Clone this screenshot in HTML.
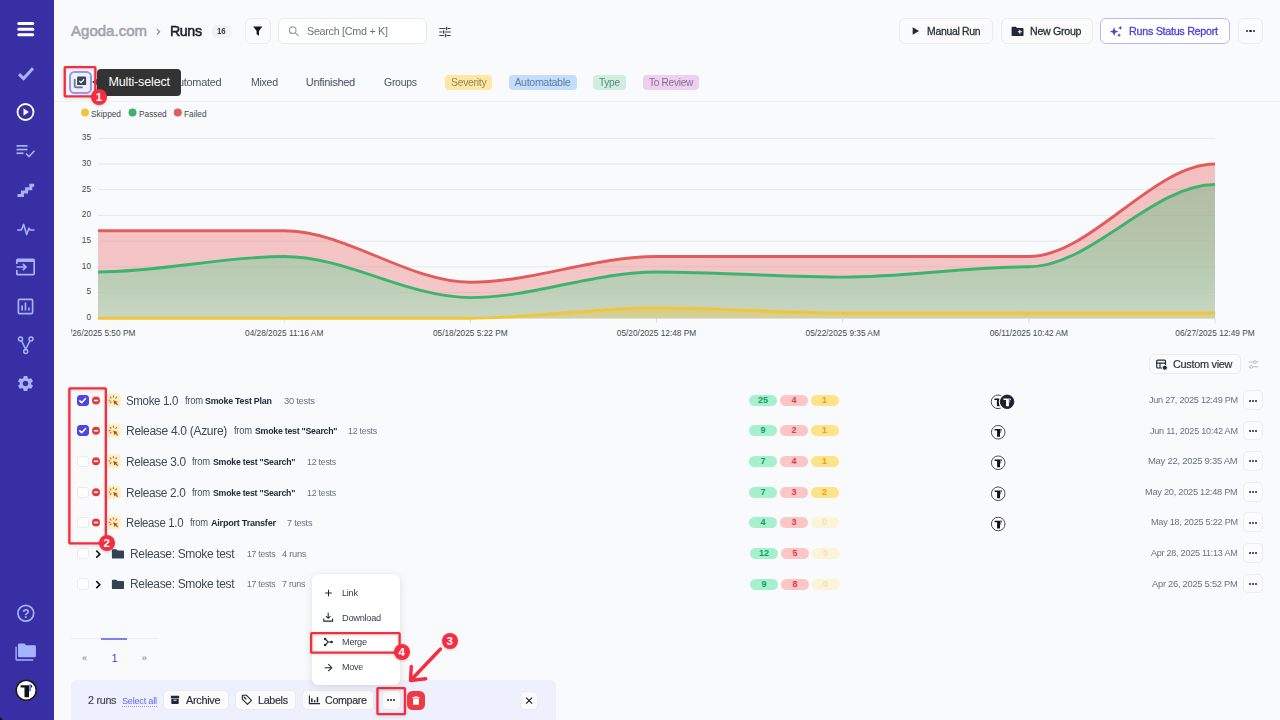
<!DOCTYPE html>
<html lang="en">
<head>
<meta charset="utf-8">
<title>Runs</title>
<style>
*{box-sizing:border-box;margin:0;padding:0}
html,body{width:1280px;height:720px;overflow:hidden}
body{background:#f9fafb;font-family:"Liberation Sans",Arial,sans-serif;color:#374151;position:relative;font-size:11px}
.abs{position:absolute}
#side{position:absolute;left:0;top:0;width:54px;height:720px;background:#372fa3}
#side svg{position:absolute}
.btn{position:absolute;background:#fbfbfc;border:1px solid #ebecef;border-radius:5px;font-size:11px;color:#1f2937;white-space:nowrap}
.btn span{position:absolute;top:50%;transform:translateY(-50%);line-height:1}
.ax{font-size:8.3px;fill:#444a4d;font-family:"Liberation Sans",Arial,sans-serif}
.axx{font-size:8.3px;fill:#444a4d;font-family:"Liberation Sans",Arial,sans-serif}
.lg{font-size:8.3px;fill:#444a4d;font-family:"Liberation Sans",Arial,sans-serif}
.tab{position:absolute;top:75px;font-size:11px;color:#374151;line-height:14px;white-space:nowrap}
.lab{position:absolute;top:75px;height:14.5px;border-radius:4px}
.cb{position:absolute;left:77.4px;width:11.3px;height:11.3px;border:1px solid #e9eaee;border-radius:3px;background:#fff}
.cb.on{background:#4f46e5;border-color:#4f46e5}
.cb svg{position:absolute;left:-1px;top:-1px}
.rt{position:absolute;left:126px;height:20px;line-height:20px;white-space:nowrap}
.ttl{font-size:13px;color:#374151}
.frm{font-size:10px;color:#4b5563;margin-left:6px}
.pl{font-size:9.5px;color:#1f2937;margin-left:3px;font-weight:bold}
.cnt{font-size:9.5px;color:#6b7280;margin-left:12px}
.pill{position:absolute;width:28px;height:11.4px;border-radius:6px;font-size:9px;line-height:11.6px;text-align:center;font-weight:bold}
.pg{background:#a7f0cd;color:#0f9f67}
.pr{background:#fcc5c6;color:#e8383d}
.py{background:#fde38a;color:#f29b0c}
.py.z{background:#fbf4d8;color:#f8e2b4}
.av{position:absolute}
.dt{position:absolute;right:42px;font-size:9.5px;color:#6b7280;line-height:16px;white-space:nowrap}
.more{position:absolute;left:1243.2px;width:20px;height:19.8px;border:1px solid #ecedf0;border-radius:5px;background:#fcfcfd}
.more i{position:absolute;top:8.5px;width:2px;height:2px;border-radius:1px;background:#111827}
.more i:nth-child(1){left:5.5px}.more i:nth-child(2){left:8.5px}.more i:nth-child(3){left:11.5px}
.redbox{position:absolute;border:2.3px solid #f62d3f;border-radius:1.5px;box-shadow:0 1px 4px rgba(0,0,0,.14)}
.num{position:absolute;width:16px;height:16px;border-radius:8px;background:#f62d3f;color:#fff;font-weight:bold;font-size:11.5px;line-height:16px;text-align:center;box-shadow:0 1px 3px rgba(0,0,0,.2)}
.t{position:absolute;white-space:nowrap;line-height:16px;height:16px;transform-origin:0 50%}
.t.m{-webkit-text-stroke:0.18px currentColor}
.t.h{-webkit-text-stroke:0.3px currentColor}
.t.s{-webkit-text-stroke:0.55px currentColor}
.dots{position:absolute;width:9px;height:2px}
.dots i{position:absolute;top:0;width:1.9px;height:1.9px;border-radius:1px;background:#1f2430}
.dots.big i{width:2.4px;height:2.4px;border-radius:1.2px;top:-0.2px}
.dots.big i:nth-child(2){left:3.4px!important}.dots.big i:nth-child(3){left:6.8px!important}
.dots i:nth-child(1){left:0}.dots i:nth-child(2){left:3px}.dots i:nth-child(3){left:6px}
</style>
</head>
<body>
<svg width="0" height="0" style="position:absolute"><defs><filter id="rbs" x="-20%" y="-20%" width="140%" height="140%"><feGaussianBlur stdDeviation="1.4"/></filter></defs></svg>
<div id="side">
<!-- hamburger -->
<svg style="left:17px;top:21px" width="18" height="18" viewBox="0.000 -0.500 18.000 18.000"><g fill="#fff"><rect x="0.3" y="0.5" width="17" height="3" rx="1.5"/><rect x="0.3" y="6.2" width="17" height="3" rx="1.5"/><rect x="0.3" y="11.8" width="17" height="3" rx="1.5"/></g></svg>
<!-- check -->
<svg style="left:17px;top:66px" width="18" height="15" viewBox="0 0 18 15"><path d="M2 8.2l4.6 4.4L16 2.2" fill="none" stroke="#a5b4fc" stroke-width="3"/></svg>
<!-- play -->
<svg style="left:15px;top:102px" width="21" height="20" viewBox="-0.500 0.000 21.000 20.000"><circle cx="10" cy="10" r="8" fill="none" stroke="#fff" stroke-width="1.8"/><path d="M8 6.2l5.4 3.8L8 13.8z" fill="#fff"/></svg>
<!-- list check -->
<svg style="left:16px;top:144px" width="20" height="14" viewBox="0 0 20 14"><g fill="#a5b4fc"><rect x="0.5" y="1" width="11" height="1.7"/><rect x="0.5" y="4.7" width="11" height="1.7"/><rect x="0.5" y="8.4" width="7" height="1.7"/></g><path d="M10 9.5l3 3 5.5-5.8" fill="none" stroke="#a5b4fc" stroke-width="1.6"/></svg>
<!-- stairs -->
<svg style="left:17px;top:183px" width="18" height="15" viewBox="-0.500 -0.700 18.000 15.000"><path d="M0 11.8h4.9v-3.43h4.2v-3.43h4.2v-3.43h3.4" fill="none" stroke="#a5b4fc" stroke-width="3"/></svg>
<!-- pulse -->
<svg style="left:17px;top:221px" width="18" height="16" viewBox="0 0 18 16"><path d="M0.8 9h3.6l2.3-5.6 3 10 2.2-6.2 1.3 1.8h3.8" fill="none" stroke="#a5b4fc" stroke-width="1.6" stroke-linejoin="round" stroke-linecap="round"/></svg>
<!-- import -->
<svg style="left:15px;top:258px" width="21" height="18" viewBox="0 0 21 18"><path d="M1.8 6V2.4c0-.6.4-1 1-1h15.4c.6 0 1 .4 1 1v13.200000000000001c0 .6-.4 1-1 1H2.800000000000001c-.6 0-1-.4-1-1V12" fill="none" stroke="#a5b4fc" stroke-width="1.7"/><rect x="1.8" y="1.4" width="17.4" height="2.6" fill="#a5b4fc"/><path d="M1.5 9h9.5M7.8 5.8L11 9l-3.200000000000001 3.2" fill="none" stroke="#a5b4fc" stroke-width="1.7"/></svg>
<!-- chart -->
<svg style="left:17px;top:298px" width="17" height="17" viewBox="0 0 17 17"><rect x="1.4" y="1.4" width="14.2" height="14.2" rx="1.2" fill="none" stroke="#a5b4fc" stroke-width="1.7"/><g fill="#a5b4fc"><rect x="4.3" y="7.5" width="1.7" height="5"/><rect x="7.6" y="4.5" width="1.7" height="8"/><rect x="11" y="9.5" width="1.7" height="3"/></g></svg>
<!-- fork -->
<svg style="left:17px;top:335px" width="18" height="21" viewBox="0.000 -0.300 18.000 21.000"><g fill="none" stroke="#a5b4fc" stroke-width="1.5"><circle cx="3.5" cy="3.7" r="2"/><circle cx="14" cy="3.7" r="2"/><circle cx="8.7" cy="16.2" r="2"/><path d="M4.5 5.4l4.200000000000001 8.6 4.300000000000001-8.6"/></g></svg>
<!-- gear -->
<svg style="left:16px;top:374px" width="19" height="19" viewBox="0 0 24 24"><path fill="#a5b4fc" d="M19.14 12.94c.04-.3.06-.61.06-.94 0-.32-.02-.64-.07-.94l2.030-1.580c.18-.14.23-.41.12-.61l-1.920-3.320c-.12-.22-.37-.29-.59-.22l-2.390.96c-.5-.38-1.030-.7-1.620-.94l-.36-2.540c-.04-.24-.24-.41-.48-.41h-3.840c-.24 0-.43.17-.47.41l-.36 2.540c-.59.24-1.130.57-1.620.94l-2.390-.96c-.22-.08-.47 0-.59.220L2.740 8.870c-.12.21-.08.47.12.61l2.030 1.580c-.05.3-.09.63-.09.940s.02.640.07.940l-2.030 1.580c-.18.140-.23.410-.12.610l1.920 3.320c.12.220.37.290.59.220l2.390-.96c.5.380 1.030.7 1.620.94l.36 2.540c.05.240.24.410.48.410h3.840c.24 0 .44-.17.470-.41l.36-2.540c.59-.24 1.130-.56 1.620-.94l2.390.96c.22.080.47 0 .59-.22l1.920-3.320c.12-.22.070-.47-.12-.61l-2.010-1.580zM12 15.600c-1.980 0-3.600-1.620-3.600-3.600s1.620-3.600 3.600-3.600 3.600 1.620 3.600 3.600-1.620 3.600-3.600 3.600z"/></svg>
<!-- help -->
<svg style="left:16px;top:604px" width="20" height="19" viewBox="-0.500 0.000 20.000 19.000"><circle cx="9.3" cy="9.3" r="7.9" fill="none" stroke="#a5b4fc" stroke-width="1.7"/><text x="9.3" y="13.6" text-anchor="middle" font-size="12" font-weight="bold" fill="#a5b4fc" font-family="Liberation Sans, sans-serif">?</text></svg>
<!-- folders -->
<svg style="left:15px;top:643px" width="22" height="18" viewBox="0 0 22 18"><path d="M4.200000000000001 0.6h5.2l1.7 1.7h8.6c.7 0 1.200000000000001.5 1.200000000000001 1.200000000000001v9.5c0 .7-.5 1.200000000000001-1.200000000000001 1.200000000000001H4.200000000000001c-.7 0-1.200000000000001-.5-1.200000000000001-1.200000000000001V1.8c0-.7.5-1.200000000000001 1.200000000000001-1.200000000000001z" fill="#a5b4fc"/><path d="M1.100000000000001 3.7v12.600000000000001c0 .4.300000000000001.7.7.7h16.5" fill="none" stroke="#a5b4fc" stroke-width="1.4"/></svg>
<!-- avatar -->
<svg style="left:15px;top:679px" width="23" height="23" viewBox="0 0 23 23"><circle cx="11.2" cy="11.2" r="10" fill="#fff" stroke="#1a1a1a" stroke-width="1.5"/><path d="M5.6 6.2h8.4v12H9.5V8.5H5.6z" fill="#111"/><rect x="14" y="5.4" width="2" height="6.8" fill="#5b8def"/><rect x="16" y="6.2" width="1.1" height="2.2" fill="#111"/></svg>
<div style="position:absolute;left:0;top:717px;width:3px;height:3px;background:radial-gradient(circle at 100% 0,rgba(0,0,0,0) 2.4px,#000 3px)"></div>
</div>

<!-- header -->
<span class="t s" style="left:71.00px;top:23.00px;font-size:15px;color:#a1a4aa;letter-spacing:0.014px;">Agoda.com</span>
<svg class="abs" style="left:156px;top:28px" width="5" height="8" viewBox="0.000 -0.300 5.000 8.000"><path d="M1 0.7l2.6 2.8L1 6.3" fill="none" stroke="#7b808a" stroke-width="1.1"/></svg>
<span class="t s" style="left:170.00px;top:23.00px;font-size:15px;color:#1c1f26;letter-spacing:-0.420px;transform:scaleX(0.9476);">Runs</span>
<div class="abs" style="left:212px;top:24.5px;width:19.5px;height:13.5px;border-radius:5px;background:#f1f2f4"></div>
<span class="t" style="left:217.00px;top:23.20px;font-size:8.5px;color:#374151;letter-spacing:-0.238px;font-weight:bold;transform:scaleX(0.9208);">16</span>
<div class="btn" style="left:245px;top:18px;width:25.5px;height:25.5px;border-radius:6px"><svg style="position:absolute;left:6px;top:7px" width="11" height="11" viewBox="-0.800 -0.200 11.000 11.000"><path d="M0.4 0.4h9.2l-3.4 4.3v4.9L3.8 8.1V4.7z" fill="#111827"/></svg></div>
<div class="abs" style="left:278.4px;top:18px;width:148.2px;height:25.6px;background:#fff;border:1px solid #e8e9ec;border-radius:6px"></div>
<svg class="abs" style="left:288px;top:26px" width="12" height="11" viewBox="-0.500 0.000 12.000 11.000"><circle cx="4.2" cy="4.2" r="3.3" fill="none" stroke="#9ca3af" stroke-width="1.2"/><path d="M6.7 6.7l3.5 3.5" stroke="#9ca3af" stroke-width="1.2"/></svg>
<span class="t" style="left:307.00px;top:23.20px;font-size:11px;color:#6b7280;letter-spacing:-0.308px;transform:scaleX(0.9818);">Search [Cmd + K]</span>
<svg class="abs" style="left:439px;top:26px" width="12" height="12" viewBox="0.000 -0.500 12.000 12.000"><g stroke="#374151" stroke-width="1.2" fill="none"><path d="M0.3 2h6.2M8.7 2h3M0.3 5.5h3M5.7 5.5h6M0.3 9h5M7.7 9h4M7.6 0.3v3.4M4.6 3.8v3.4M6.6 7.3v3.4"/></g></svg>

<div class="btn" style="left:899px;top:18px;width:93.7px;height:25.6px;border-radius:6px"><svg style="position:absolute;left:12px;top:8px" width="8" height="8" viewBox="-0.500 0.000 8.000 8.000"><path d="M0.2 0.3l6.4 3.7-6.4 3.7z" fill="#1f2937"/></svg></div>
<span class="t h" style="left:927.20px;top:23.00px;font-size:11px;color:#2a303c;letter-spacing:-0.308px;transform:scaleX(0.9477);">Manual Run</span>
<div class="btn" style="left:1001px;top:18px;width:91.6px;height:25.6px;border-radius:6px"><svg style="position:absolute;left:9px;top:7px" width="13" height="11" viewBox="-0.500 -0.500 13.000 11.000"><path d="M1 0.2h3.3l1.2 1.2h5.6c.5 0 .9.4.9.9v6.400000000000001c0 .5-.4.9-.9.9H1c-.5 0-.9-.4-.9-.9V1.100000000000001c0-.5.4-.9.9-.9z" fill="#1f2937"/><path d="M8.3 3.3v4M6.3 5.3h4" stroke="#fff" stroke-width="1.1"/></svg></div>
<span class="t h" style="left:1029.50px;top:23.00px;font-size:11px;color:#2a303c;letter-spacing:-0.308px;transform:scaleX(0.9685);">New Group</span>
<div class="btn" style="left:1100px;top:18px;width:129.7px;height:25.6px;border-radius:6px;border-color:#b4b8f5;background:#fff"><svg style="position:absolute;left:8px;top:6px" width="15" height="13" viewBox="-0.500 0.000 15.000 13.000"><g fill="#4a42d6"><path d="M4.6 2.3l1.2 3.100000000000001 3.100000000000001 1.2-3.100000000000001 1.2-1.2 3.100000000000001-1.2-3.100000000000001L0.3 6.6l3.100000000000001-1.2z"/><path d="M10.8 0.7l.65 1.55 1.55.65-1.55.65-.65 1.55-.65-1.55-1.55-.65 1.55-.65z"/><path d="M9.6 8.2l.6 1.400000000000001 1.400000000000001.6-1.400000000000001.6-.6 1.400000000000001-.6-1.400000000000001-1.400000000000001-.6 1.400000000000001-.6z"/></g></svg></div>
<span class="t h" style="left:1129.20px;top:23.00px;font-size:11px;color:#4a42d6;letter-spacing:-0.308px;transform:scaleX(0.9806);">Runs Status Report</span>
<div class="btn" style="left:1238.3px;top:18px;width:24.7px;height:25.6px;border-radius:6px"></div>
<div class="dots big" style="left:1246px;top:30px"><i></i><i></i><i></i></div>

<!-- tabs -->
<div class="abs" style="left:54px;top:101px;width:1226px;height:1px;background:#eff0f3"></div>
<span class="t" style="left:171.44px;top:73.50px;font-size:11px;color:#4b5563;letter-spacing:-0.308px;transform:scaleX(0.9964);">Automated</span>
<span class="t" style="left:250.50px;top:73.50px;font-size:11px;color:#4b5563;letter-spacing:-0.308px;transform:scaleX(0.9640);">Mixed</span>
<span class="t" style="left:305.80px;top:73.50px;font-size:11px;color:#4b5563;letter-spacing:-0.287px;">Unfinished</span>
<span class="t" style="left:383.60px;top:73.50px;font-size:11px;color:#4b5563;letter-spacing:-0.308px;transform:scaleX(0.9555);">Groups</span>
<div class="lab" style="left:444.8px;width:46.8px;background:#fde7a6"></div>
<span class="t" style="left:450.60px;top:74.30px;font-size:10.5px;color:#9a8450;letter-spacing:-0.294px;transform:scaleX(0.9922);">Severity</span>
<div class="lab" style="left:508.5px;width:68px;background:#c3ddfb"></div>
<span class="t" style="left:514.40px;top:74.30px;font-size:10.5px;color:#5f7fa6;letter-spacing:-0.277px;">Automatable</span>
<div class="lab" style="left:592.9px;width:33px;background:#cfeee0"></div>
<span class="t" style="left:599.20px;top:74.30px;font-size:10.5px;color:#5a8876;letter-spacing:-0.294px;transform:scaleX(0.9642);">Type</span>
<div class="lab" style="left:642.6px;width:56.2px;background:#ecd0ef"></div>
<span class="t" style="left:648.70px;top:74.30px;font-size:10.5px;color:#8d6a92;letter-spacing:-0.294px;transform:scaleX(0.9613);">To Review</span>

<!-- multi-select -->
<div class="abs" style="left:69px;top:71px;width:22.8px;height:22.8px;border-radius:5.5px;background:#eef0fc;border:2px solid #9497f5"></div>
<svg class="abs" style="left:73px;top:76px" width="15" height="13" viewBox="-0.500 0.000 15.000 13.000"><path d="M1.2 3.6v6.3c0 .8.6 1.400000000000001 1.400000000000001 1.400000000000001h6" fill="none" stroke="#6b7280" stroke-width="1.7" stroke-linecap="round"/><rect x="3.6" y="0.6" width="9" height="8.5" rx="1.2" fill="#3b4556"/><path d="M5.7 4.9l1.8 1.7 3.1-3.3" fill="none" stroke="#fff" stroke-width="1.25"/></svg>
<div class="abs" style="left:97px;top:69px;width:83.6px;height:26.7px;border-radius:4px;background:#333"></div>
<div class="abs" style="left:92px;top:79.3px;width:0;height:0;border:3.2px solid transparent;border-left:0;border-right:5.4px solid #333"></div>
<svg class="abs" style="left:55px;top:58px" width="50" height="48" viewBox="55 58 50 48"><rect x="64.75" y="67.95" width="30.60" height="29.20" rx="0.6" fill="none" stroke="#000" stroke-opacity="0.13" stroke-width="2.9" filter="url(#rbs)"/><rect x="64.75" y="67.15" width="30.60" height="29.20" rx="0.6" fill="none" stroke="#f62d3f" stroke-width="2.3"/></svg>
<span class="t" style="left:108.50px;top:74.30px;font-size:12.5px;color:#fff;letter-spacing:-0.156px;">Multi-select</span>
<div class="num" style="left:90.9px;top:89.2px">1</div>

<svg width="1280" height="360" viewBox="0 0 1280 360" style="position:absolute;left:0;top:0">
<defs>
<linearGradient id="gr" x1="0" y1="0" x2="0" y2="1"><stop offset="0" stop-color="#ec6f6f" stop-opacity="0.42"/><stop offset="1" stop-color="#ec6f6f" stop-opacity="0.36"/></linearGradient>
<linearGradient id="gg" x1="0" y1="0" x2="0" y2="1"><stop offset="0" stop-color="#3db46d" stop-opacity="0.35"/><stop offset="1" stop-color="#aae1be" stop-opacity="0.6"/></linearGradient>
<linearGradient id="gy" x1="0" y1="0" x2="0" y2="1"><stop offset="0" stop-color="#f0c53a" stop-opacity="0.5"/><stop offset="1" stop-color="#f0c53a" stop-opacity="0.25"/></linearGradient>
</defs>
<line x1="98.0" x2="1215.0" y1="318.2" y2="318.2" stroke="#e7e8ea" stroke-width="1"/>
<text x="91" y="320.1" text-anchor="end" class="ax">0</text>
<line x1="98.0" x2="1215.0" y1="292.5" y2="292.5" stroke="#e7e8ea" stroke-width="1"/>
<text x="91" y="294.4" text-anchor="end" class="ax">5</text>
<line x1="98.0" x2="1215.0" y1="266.8" y2="266.8" stroke="#e7e8ea" stroke-width="1"/>
<text x="91" y="268.7" text-anchor="end" class="ax">10</text>
<line x1="98.0" x2="1215.0" y1="241.1" y2="241.1" stroke="#e7e8ea" stroke-width="1"/>
<text x="91" y="243.0" text-anchor="end" class="ax">15</text>
<line x1="98.0" x2="1215.0" y1="215.4" y2="215.4" stroke="#e7e8ea" stroke-width="1"/>
<text x="91" y="217.3" text-anchor="end" class="ax">20</text>
<line x1="98.0" x2="1215.0" y1="189.7" y2="189.7" stroke="#e7e8ea" stroke-width="1"/>
<text x="91" y="191.6" text-anchor="end" class="ax">25</text>
<line x1="98.0" x2="1215.0" y1="164.0" y2="164.0" stroke="#e7e8ea" stroke-width="1"/>
<text x="91" y="165.9" text-anchor="end" class="ax">30</text>
<line x1="98.0" x2="1215.0" y1="138.3" y2="138.3" stroke="#e7e8ea" stroke-width="1"/>
<text x="91" y="140.2" text-anchor="end" class="ax">35</text>
<line x1="284.2" x2="284.2" y1="318.2" y2="323.2" stroke="#dcdde0" stroke-width="1"/>
<line x1="470.3" x2="470.3" y1="318.2" y2="323.2" stroke="#dcdde0" stroke-width="1"/>
<line x1="656.5" x2="656.5" y1="318.2" y2="323.2" stroke="#dcdde0" stroke-width="1"/>
<line x1="842.7" x2="842.7" y1="318.2" y2="323.2" stroke="#dcdde0" stroke-width="1"/>
<line x1="1028.8" x2="1028.8" y1="318.2" y2="323.2" stroke="#dcdde0" stroke-width="1"/>
<line x1="1215.0" x2="1215.0" y1="318.2" y2="323.2" stroke="#dcdde0" stroke-width="1"/>
<path d="M98.00 230.82 C160.06 230.82 222.11 230.82 284.17 230.82 C346.22 230.82 408.28 282.22 470.33 282.22 C532.39 282.22 594.44 256.52 656.50 256.52 C718.56 256.52 780.61 256.52 842.67 256.52 C904.72 256.52 966.78 256.52 1028.83 256.52 C1090.89 256.52 1152.94 164.00 1215.00 164.00 L1215.00 318.20 L98.00 318.20 Z" fill="url(#gr)"/>
<path d="M98.00 271.94 C160.06 271.94 222.11 256.52 284.17 256.52 C346.22 256.52 408.28 297.64 470.33 297.64 C532.39 297.64 594.44 271.94 656.50 271.94 C718.56 271.94 780.61 277.08 842.67 277.08 C904.72 277.08 966.78 266.80 1028.83 266.80 C1090.89 266.80 1152.94 184.56 1215.00 184.56 L1215.00 318.20 L98.00 318.20 Z" fill="url(#gg)"/>
<path d="M98.00 318.20 C160.06 318.20 222.11 318.20 284.17 318.20 C346.22 318.20 408.28 318.20 470.33 318.20 C532.39 318.20 594.44 307.92 656.50 307.92 C718.56 307.92 780.61 313.06 842.67 313.06 C904.72 313.06 966.78 313.06 1028.83 313.06 C1090.89 313.06 1152.94 313.06 1215.00 313.06 L1215.00 318.20 L98.00 318.20 Z" fill="url(#gy)"/>
<path d="M98.00 230.82 C160.06 230.82 222.11 230.82 284.17 230.82 C346.22 230.82 408.28 282.22 470.33 282.22 C532.39 282.22 594.44 256.52 656.50 256.52 C718.56 256.52 780.61 256.52 842.67 256.52 C904.72 256.52 966.78 256.52 1028.83 256.52 C1090.89 256.52 1152.94 164.00 1215.00 164.00" fill="none" stroke="#e25c5c" stroke-width="2.9"/>
<path d="M98.00 271.94 C160.06 271.94 222.11 256.52 284.17 256.52 C346.22 256.52 408.28 297.64 470.33 297.64 C532.39 297.64 594.44 271.94 656.50 271.94 C718.56 271.94 780.61 277.08 842.67 277.08 C904.72 277.08 966.78 266.80 1028.83 266.80 C1090.89 266.80 1152.94 184.56 1215.00 184.56" fill="none" stroke="#3db46d" stroke-width="2.9"/>
<path d="M98.00 318.20 C160.06 318.20 222.11 318.20 284.17 318.20 C346.22 318.20 408.28 318.20 470.33 318.20 C532.39 318.20 594.44 307.92 656.50 307.92 C718.56 307.92 780.61 313.06 842.67 313.06 C904.72 313.06 966.78 313.06 1028.83 313.06 C1090.89 313.06 1152.94 313.06 1215.00 313.06" fill="none" stroke="#f0c53a" stroke-width="2.9"/>
<svg x="71" y="320" width="1209" height="30" viewBox="71 320 1209 30"><text x="98.0" y="336" text-anchor="middle" class="axx">04/26/2025 5:50 PM</text>
<text x="284.2" y="336" text-anchor="middle" class="axx">04/28/2025 11:16 AM</text>
<text x="470.3" y="336" text-anchor="middle" class="axx">05/18/2025 5:22 PM</text>
<text x="656.5" y="336" text-anchor="middle" class="axx">05/20/2025 12:48 PM</text>
<text x="842.7" y="336" text-anchor="middle" class="axx">05/22/2025 9:35 AM</text>
<text x="1028.8" y="336" text-anchor="middle" class="axx">06/11/2025 10:42 AM</text>
<text x="1215.0" y="336" text-anchor="middle" class="axx">06/27/2025 12:49 PM</text>
</svg><circle cx="85" cy="112.5" r="4" fill="#f0c53a"/><text x="91" y="117" class="lg">Skipped</text>
<circle cx="132.5" cy="112.5" r="4" fill="#3db46d"/><text x="139" y="117" class="lg">Passed</text>
<circle cx="177.8" cy="112.5" r="4" fill="#e25c5c"/><text x="184" y="117" class="lg">Failed</text>
</svg>


<!-- custom view -->
<div class="btn" style="left:1149.2px;top:354.2px;width:91.5px;height:20px;border-radius:5px"><svg style="position:absolute;left:6px;top:4px" width="12" height="12" viewBox="0.000 -0.500 12.000 12.000"><rect x="0.7" y="0.7" width="8.8" height="7.8" rx="1" fill="none" stroke="#1f2937" stroke-width="1.2"/><path d="M0.7 3.6h8.8M4 3.6v5" stroke="#1f2937" stroke-width="1.1"/><circle cx="8.8" cy="8.2" r="2.5" fill="#1f2937" stroke="#fcfcfd" stroke-width="0.9"/></svg></div>
<span class="t m" style="left:1172.50px;top:356.30px;font-size:11.5px;color:#2a303c;letter-spacing:-0.322px;transform:scaleX(0.9504);">Custom view</span>
<svg class="abs" style="left:1248px;top:359px" width="11" height="11" viewBox="-0.500 -0.500 11.000 11.000"><g stroke="#b4b9c1" stroke-width="0.9" fill="none"><path d="M0.2 2.5h5M7.8 2.5h2M0.2 7.3h1.2M4.2 7.3h5.6"/><circle cx="6.4" cy="2.5" r="1.4"/><circle cx="2.8" cy="7.3" r="1.4"/></g></svg>

<span class="cb on" style="top:394.90px"> <svg width="11.3" height="11.3" viewBox="0 0 11.3 11.3"><path d="M2.8 5.9l1.9 1.8 3.7-4" fill="none" stroke="#fff" stroke-width="1.6" stroke-linecap="round" stroke-linejoin="round"/></svg></span><svg style="position:absolute;left:92px;top:396px" width="8" height="9" viewBox="0.000 -0.500 8.000 9.000"><circle cx="4" cy="4" r="4" fill="#e5383f"/><rect x="1.8" y="3.3" width="4.4" height="1.4" rx="0.4" fill="#fff"/></svg><svg style="position:absolute;left:107px;top:393px" width="14" height="15" viewBox="-0.600 -0.400 14.000 15.000"><rect width="13.1" height="13.9" rx="3.4" fill="#fdf0c8"/><g stroke="#c8680f" stroke-width="1.15" stroke-linecap="round"><path d="M5.8 2.5v1.1M2.6 3.8l0.85 0.85M1.4 6.8h1.1M2.6 9.4l0.85-0.85M9 3.8l-0.85 0.85"/></g><path d="M5.5 6.8l4.7 1.5-1.55 0.95 1.95 1.95-0.85 0.85-1.95-1.95-0.9 1.5z" fill="#b8520a"/></svg><span class="t" style="left:126.00px;top:392.50px;font-size:12.5px;color:#414957;letter-spacing:-0.350px;transform:scaleX(0.9181);">Smoke 1.0</span><span class="t" style="left:184.50px;top:392.80px;font-size:10px;color:#4b5563;letter-spacing:-0.280px;transform:scaleX(0.9395);">from</span><span class="t" style="left:205.20px;top:392.70px;font-size:9.5px;color:#1f2937;letter-spacing:-0.266px;font-weight:bold;transform:scaleX(0.9329);">Smoke Test Plan</span><span class="t" style="left:283.50px;top:392.80px;font-size:9.5px;color:#6b7280;letter-spacing:-0.266px;transform:scaleX(0.9867);">30 tests</span><span class="pill pg" style="left:749px;top:394.80px">25</span><span class="pill pr" style="left:780px;top:394.80px">4</span><span class="pill py" style="left:810.6px;top:394.80px">1</span><svg class="av" style="left:989px;top:392px" width="18" height="19" viewBox="-1.000 -1.800 18.000 19.000"><circle cx="8" cy="8" r="8.4" fill="#fff"/><circle cx="8" cy="8" r="6.8" fill="#fff" stroke="#333" stroke-width="0.9"/><path d="M4.4 4.8h5.4v7.7H6.9V6.3H4.4z" fill="#111"/><rect x="9.8" y="4.3" width="1.3" height="4.4" fill="#5b8def"/><rect x="11.1" y="4.8" width="0.7" height="1.4" fill="#111"/></svg><svg class="av" style="left:998px;top:392px" width="19" height="19" viewBox="-1.100 -1.800 19.000 19.000"><circle cx="8" cy="8" r="8.4" fill="#fff"/><circle cx="8" cy="8" r="6.8" fill="#222" stroke="#222" stroke-width="0.9"/><path d="M4.4 4.8h5.4v7.7H6.9V6.3H4.4z" fill="#fff"/><rect x="9.8" y="4.3" width="1.3" height="4.4" fill="#5b8def"/><rect x="11.1" y="4.8" width="0.7" height="1.4" fill="#fff"/></svg><span class="t" style="left:1148.80px;top:392.45px;font-size:9.5px;color:#6b7280;letter-spacing:-0.266px;transform:scaleX(0.9599);">Jun 27, 2025 12:49 PM</span><span class="more" style="top:390.30px"></span><div class="dots" style="left:1249px;top:400px"><i></i><i></i><i></i></div>
<span class="cb on" style="top:425.15px"> <svg width="11.3" height="11.3" viewBox="0 0 11.3 11.3"><path d="M2.8 5.9l1.9 1.8 3.7-4" fill="none" stroke="#fff" stroke-width="1.6" stroke-linecap="round" stroke-linejoin="round"/></svg></span><svg style="position:absolute;left:92px;top:426px" width="8" height="9" viewBox="0.000 -0.750 8.000 9.000"><circle cx="4" cy="4" r="4" fill="#e5383f"/><rect x="1.8" y="3.3" width="4.4" height="1.4" rx="0.4" fill="#fff"/></svg><svg style="position:absolute;left:107px;top:423px" width="14" height="15" viewBox="-0.600 -0.650 14.000 15.000"><rect width="13.1" height="13.9" rx="3.4" fill="#fdf0c8"/><g stroke="#c8680f" stroke-width="1.15" stroke-linecap="round"><path d="M5.8 2.5v1.1M2.6 3.8l0.85 0.85M1.4 6.8h1.1M2.6 9.4l0.85-0.85M9 3.8l-0.85 0.85"/></g><path d="M5.5 6.8l4.7 1.5-1.55 0.95 1.95 1.95-0.85 0.85-1.95-1.95-0.9 1.5z" fill="#b8520a"/></svg><span class="t" style="left:126.00px;top:422.75px;font-size:12.5px;color:#414957;letter-spacing:-0.350px;transform:scaleX(0.9659);">Release 4.0 (Azure)</span><span class="t" style="left:233.70px;top:423.05px;font-size:10px;color:#4b5563;letter-spacing:-0.280px;transform:scaleX(0.9395);">from</span><span class="t" style="left:254.50px;top:422.95px;font-size:9.5px;color:#1f2937;letter-spacing:-0.266px;font-weight:bold;transform:scaleX(0.9244);">Smoke test &quot;Search&quot;</span><span class="t" style="left:348.00px;top:423.05px;font-size:9.5px;color:#6b7280;letter-spacing:-0.266px;transform:scaleX(0.9294);">12 tests</span><span class="pill pg" style="left:749px;top:425.05px">9</span><span class="pill pr" style="left:780px;top:425.05px">2</span><span class="pill py" style="left:810.6px;top:425.05px">1</span><svg class="av" style="left:989px;top:423px" width="19" height="19" viewBox="-1.200 -1.250 19.000 19.000"><circle cx="8" cy="8" r="8.4" fill="#fff"/><circle cx="8" cy="8" r="6.8" fill="#fff" stroke="#333" stroke-width="0.9"/><path d="M4.4 4.8h5.4v7.7H6.9V6.3H4.4z" fill="#111"/><rect x="9.8" y="4.3" width="1.3" height="4.4" fill="#5b8def"/><rect x="11.1" y="4.8" width="0.7" height="1.4" fill="#111"/></svg><span class="t" style="left:1150.00px;top:422.70px;font-size:9.5px;color:#6b7280;letter-spacing:-0.266px;transform:scaleX(0.9597);">Jun 11, 2025 10:42 AM</span><span class="more" style="top:420.55px"></span><div class="dots" style="left:1249px;top:430px"><i></i><i></i><i></i></div>
<span class="cb" style="top:455.65px"></span><svg style="position:absolute;left:92px;top:457px" width="8" height="9" viewBox="0.000 -0.250 8.000 9.000"><circle cx="4" cy="4" r="4" fill="#e5383f"/><rect x="1.8" y="3.3" width="4.4" height="1.4" rx="0.4" fill="#fff"/></svg><svg style="position:absolute;left:107px;top:454px" width="14" height="15" viewBox="-0.600 -0.150 14.000 15.000"><rect width="13.1" height="13.9" rx="3.4" fill="#fdf0c8"/><g stroke="#c8680f" stroke-width="1.15" stroke-linecap="round"><path d="M5.8 2.5v1.1M2.6 3.8l0.85 0.85M1.4 6.8h1.1M2.6 9.4l0.85-0.85M9 3.8l-0.85 0.85"/></g><path d="M5.5 6.8l4.7 1.5-1.55 0.95 1.95 1.95-0.85 0.85-1.95-1.95-0.9 1.5z" fill="#b8520a"/></svg><span class="t" style="left:126.00px;top:453.75px;font-size:12.5px;color:#414957;letter-spacing:-0.350px;transform:scaleX(0.9491);">Release 3.0</span><span class="t" style="left:192.00px;top:454.05px;font-size:10px;color:#4b5563;letter-spacing:-0.280px;transform:scaleX(0.9395);">from</span><span class="t" style="left:212.80px;top:453.95px;font-size:9.5px;color:#1f2937;letter-spacing:-0.266px;font-weight:bold;transform:scaleX(0.9244);">Smoke test &quot;Search&quot;</span><span class="t" style="left:306.50px;top:454.05px;font-size:9.5px;color:#6b7280;letter-spacing:-0.266px;transform:scaleX(0.9294);">12 tests</span><span class="pill pg" style="left:749px;top:455.55px">7</span><span class="pill pr" style="left:780px;top:455.55px">4</span><span class="pill py" style="left:810.6px;top:455.55px">1</span><svg class="av" style="left:989px;top:453px" width="19" height="19" viewBox="-1.200 -1.750 19.000 19.000"><circle cx="8" cy="8" r="8.4" fill="#fff"/><circle cx="8" cy="8" r="6.8" fill="#fff" stroke="#333" stroke-width="0.9"/><path d="M4.4 4.8h5.4v7.7H6.9V6.3H4.4z" fill="#111"/><rect x="9.8" y="4.3" width="1.3" height="4.4" fill="#5b8def"/><rect x="11.1" y="4.8" width="0.7" height="1.4" fill="#111"/></svg><span class="t" style="left:1148.30px;top:453.20px;font-size:9.5px;color:#6b7280;letter-spacing:-0.266px;transform:scaleX(0.9966);">May 22, 2025 9:35 AM</span><span class="more" style="top:451.05px"></span><div class="dots" style="left:1249px;top:460px"><i></i><i></i><i></i></div>
<span class="cb" style="top:486.65px"></span><svg style="position:absolute;left:92px;top:488px" width="8" height="9" viewBox="0.000 -0.250 8.000 9.000"><circle cx="4" cy="4" r="4" fill="#e5383f"/><rect x="1.8" y="3.3" width="4.4" height="1.4" rx="0.4" fill="#fff"/></svg><svg style="position:absolute;left:107px;top:485px" width="14" height="15" viewBox="-0.600 -0.150 14.000 15.000"><rect width="13.1" height="13.9" rx="3.4" fill="#fdf0c8"/><g stroke="#c8680f" stroke-width="1.15" stroke-linecap="round"><path d="M5.8 2.5v1.1M2.6 3.8l0.85 0.85M1.4 6.8h1.1M2.6 9.4l0.85-0.85M9 3.8l-0.85 0.85"/></g><path d="M5.5 6.8l4.7 1.5-1.55 0.95 1.95 1.95-0.85 0.85-1.95-1.95-0.9 1.5z" fill="#b8520a"/></svg><span class="t" style="left:126.00px;top:484.75px;font-size:12.5px;color:#414957;letter-spacing:-0.350px;transform:scaleX(0.9459);">Release 2.0</span><span class="t" style="left:192.20px;top:485.05px;font-size:10px;color:#4b5563;letter-spacing:-0.280px;transform:scaleX(0.9395);">from</span><span class="t" style="left:213.00px;top:484.95px;font-size:9.5px;color:#1f2937;letter-spacing:-0.266px;font-weight:bold;transform:scaleX(0.9222);">Smoke test &quot;Search&quot;</span><span class="t" style="left:306.70px;top:485.05px;font-size:9.5px;color:#6b7280;letter-spacing:-0.266px;transform:scaleX(0.9294);">12 tests</span><span class="pill pg" style="left:749px;top:486.55px">7</span><span class="pill pr" style="left:780px;top:486.55px">3</span><span class="pill py" style="left:810.6px;top:486.55px">2</span><svg class="av" style="left:989px;top:484px" width="19" height="19" viewBox="-1.200 -1.750 19.000 19.000"><circle cx="8" cy="8" r="8.4" fill="#fff"/><circle cx="8" cy="8" r="6.8" fill="#fff" stroke="#333" stroke-width="0.9"/><path d="M4.4 4.8h5.4v7.7H6.9V6.3H4.4z" fill="#111"/><rect x="9.8" y="4.3" width="1.3" height="4.4" fill="#5b8def"/><rect x="11.1" y="4.8" width="0.7" height="1.4" fill="#111"/></svg><span class="t" style="left:1145.20px;top:484.20px;font-size:9.5px;color:#6b7280;letter-spacing:-0.266px;transform:scaleX(0.9712);">May 20, 2025 12:48 PM</span><span class="more" style="top:482.05px"></span><div class="dots" style="left:1249px;top:491px"><i></i><i></i><i></i></div>
<span class="cb" style="top:516.90px"></span><svg style="position:absolute;left:92px;top:518px" width="8" height="9" viewBox="0.000 -0.500 8.000 9.000"><circle cx="4" cy="4" r="4" fill="#e5383f"/><rect x="1.8" y="3.3" width="4.4" height="1.4" rx="0.4" fill="#fff"/></svg><svg style="position:absolute;left:107px;top:515px" width="14" height="15" viewBox="-0.600 -0.400 14.000 15.000"><rect width="13.1" height="13.9" rx="3.4" fill="#fdf0c8"/><g stroke="#c8680f" stroke-width="1.15" stroke-linecap="round"><path d="M5.8 2.5v1.1M2.6 3.8l0.85 0.85M1.4 6.8h1.1M2.6 9.4l0.85-0.85M9 3.8l-0.85 0.85"/></g><path d="M5.5 6.8l4.7 1.5-1.55 0.95 1.95 1.95-0.85 0.85-1.95-1.95-0.9 1.5z" fill="#b8520a"/></svg><span class="t" style="left:126.00px;top:514.50px;font-size:12.5px;color:#414957;letter-spacing:-0.350px;transform:scaleX(0.9095);">Release 1.0</span><span class="t" style="left:189.70px;top:514.80px;font-size:10px;color:#4b5563;letter-spacing:-0.280px;transform:scaleX(0.9395);">from</span><span class="t" style="left:210.50px;top:514.70px;font-size:9.5px;color:#1f2937;letter-spacing:-0.266px;font-weight:bold;transform:scaleX(0.9586);">Airport Transfer</span><span class="t" style="left:287.00px;top:514.80px;font-size:9.5px;color:#6b7280;letter-spacing:-0.266px;transform:scaleX(0.9658);">7 tests</span><span class="pill pg" style="left:749px;top:516.80px">4</span><span class="pill pr" style="left:780px;top:516.80px">3</span><span class="pill py z" style="left:810.6px;top:516.80px">0</span><svg class="av" style="left:989px;top:515px" width="19" height="18" viewBox="-1.200 -1.000 19.000 18.000"><circle cx="8" cy="8" r="8.4" fill="#fff"/><circle cx="8" cy="8" r="6.8" fill="#fff" stroke="#333" stroke-width="0.9"/><path d="M4.4 4.8h5.4v7.7H6.9V6.3H4.4z" fill="#111"/><rect x="9.8" y="4.3" width="1.3" height="4.4" fill="#5b8def"/><rect x="11.1" y="4.8" width="0.7" height="1.4" fill="#111"/></svg><span class="t" style="left:1150.90px;top:514.45px;font-size:9.5px;color:#6b7280;letter-spacing:-0.266px;transform:scaleX(0.9620);">May 18, 2025 5:22 PM</span><span class="more" style="top:512.30px"></span><div class="dots" style="left:1249px;top:522px"><i></i><i></i><i></i></div>
<span class="cb" style="top:547.85px"></span><svg style="position:absolute;left:95px;top:549px" width="7" height="10" viewBox="0.000 -0.650 7.000 10.000"><path d="M1.3 1l3.6 3.5-3.6 3.5" fill="none" stroke="#111" stroke-width="1.5"/></svg><svg style="position:absolute;left:111px;top:549px" width="14" height="11" viewBox="-0.700 -0.050 14.000 11.000"><path d="M1.1 0.2h3.5l1.3 1.3h5.5c0.5 0 0.9 0.4 0.9 0.9v6.2c0 0.5-0.4 0.9-0.9 0.9H1.1c-0.5 0-0.9-0.4-0.9-0.9V1.1c0-0.5 0.4-0.9 0.9-0.9z" fill="#334155"/></svg><span class="t" style="left:130.00px;top:545.75px;font-size:12.5px;color:#414957;letter-spacing:-0.350px;transform:scaleX(0.9592);">Release: Smoke test</span><span class="t" style="left:246.50px;top:546.05px;font-size:9.5px;color:#6b7280;letter-spacing:-0.266px;transform:scaleX(0.9071);">17 tests</span><span class="t" style="left:281.50px;top:546.05px;font-size:9.5px;color:#6b7280;letter-spacing:-0.266px;transform:scaleX(0.9770);">4 runs</span><span class="pill pg" style="left:750px;top:548.05px">12</span><span class="pill pr" style="left:781px;top:548.05px">5</span><span class="pill py z" style="left:811.6px;top:548.05px">0</span><span class="t" style="left:1151.30px;top:545.20px;font-size:9.5px;color:#6b7280;letter-spacing:-0.266px;transform:scaleX(0.9510);">Apr 28, 2025 11:13 AM</span><span class="more" style="top:543.05px"></span><div class="dots" style="left:1249px;top:552px"><i></i><i></i><i></i></div>
<span class="cb" style="top:578.35px"></span><svg style="position:absolute;left:95px;top:580px" width="7" height="10" viewBox="0.000 -0.150 7.000 10.000"><path d="M1.3 1l3.6 3.5-3.6 3.5" fill="none" stroke="#111" stroke-width="1.5"/></svg><svg style="position:absolute;left:111px;top:579px" width="14" height="11" viewBox="-0.700 -0.550 14.000 11.000"><path d="M1.1 0.2h3.5l1.3 1.3h5.5c0.5 0 0.9 0.4 0.9 0.9v6.2c0 0.5-0.4 0.9-0.9 0.9H1.1c-0.5 0-0.9-0.4-0.9-0.9V1.1c0-0.5 0.4-0.9 0.9-0.9z" fill="#334155"/></svg><span class="t" style="left:130.00px;top:575.75px;font-size:12.5px;color:#414957;letter-spacing:-0.350px;transform:scaleX(0.9592);">Release: Smoke test</span><span class="t" style="left:246.50px;top:576.05px;font-size:9.5px;color:#6b7280;letter-spacing:-0.266px;transform:scaleX(0.9071);">17 tests</span><span class="t" style="left:281.50px;top:576.05px;font-size:9.5px;color:#6b7280;letter-spacing:-0.266px;transform:scaleX(0.9371);">7 runs</span><span class="pill pg" style="left:750px;top:578.55px">9</span><span class="pill pr" style="left:781px;top:578.55px">8</span><span class="pill py z" style="left:811.6px;top:578.55px">0</span><span class="t" style="left:1152.20px;top:575.70px;font-size:9.5px;color:#6b7280;letter-spacing:-0.266px;transform:scaleX(0.9821);">Apr 26, 2025 5:52 PM</span><span class="more" style="top:573.55px"></span><div class="dots" style="left:1249px;top:583px"><i></i><i></i><i></i></div>


<!-- red box 2 -->
<svg class="abs" style="left:60px;top:379px" width="55" height="174" viewBox="60 379 55 174"><rect x="69.35" y="389.25" width="36.50" height="155.00" rx="0.6" fill="none" stroke="#000" stroke-opacity="0.13" stroke-width="2.9" filter="url(#rbs)"/><rect x="69.35" y="388.45" width="36.50" height="155.00" rx="0.6" fill="none" stroke="#f62d3f" stroke-width="2.3"/></svg>
<div class="num" style="left:98.6px;top:534.6px">2</div>

<!-- pagination -->
<div class="abs" style="left:70.5px;top:638px;width:87px;height:1px;background:#eceef1"></div>
<div class="abs" style="left:101.2px;top:637.5px;width:26.3px;height:2px;background:#7c80f2"></div>
<span class="t" style="left:82.00px;top:649.50px;font-size:9px;color:#6b7280;">«</span>
<span class="t" style="left:111.40px;top:649.50px;font-size:11px;color:#4f46e5;">1</span>
<span class="t" style="left:141.70px;top:649.50px;font-size:9px;color:#6b7280;">»</span>

<!-- bottom bar -->
<div class="abs" style="left:70.5px;top:679.5px;width:485px;height:41px;background:#eef0fd;border-radius:6px 6px 0 0"></div>
<span class="t m" style="left:87.50px;top:692.20px;font-size:11.5px;color:#3f4655;letter-spacing:-0.322px;transform:scaleX(0.9388);">2 runs</span>
<span class="t" style="left:122.00px;top:692.50px;font-size:9.5px;color:#6366f1;letter-spacing:-0.266px;transform:scaleX(0.9677);">Select all</span>
<div class="abs" style="left:122px;top:706px;width:35px;height:0;border-top:1px dotted #8b8ff5"></div>
<div class="btn" style="left:163.2px;top:690.4px;width:65.8px;height:19.3px"><svg style="position:absolute;left:6px;top:4px" width="10" height="10" viewBox="-0.500 -0.500 10.000 10.000"><rect x="0.3" y="0.2" width="8.4" height="2.3" rx="0.4" fill="#1f2937"/><path d="M0.8 3.1h7.4v4.7c0 .4-.3.7-.7.7H1.500000000000001c-.4 0-.7-.3-.7-.7z" fill="#1f2937"/><rect x="3" y="4.2" width="3" height="1" fill="#fcfcfd"/></svg></div>
<span class="t m" style="left:185.70px;top:692.20px;font-size:11.5px;color:#2a303c;letter-spacing:-0.322px;transform:scaleX(0.9471);">Archive</span>
<div class="btn" style="left:235px;top:690.4px;width:61.2px;height:19.3px"><svg style="position:absolute;left:5px;top:3px" width="12" height="12" viewBox="-0.500 -0.500 12.000 12.000"><path d="M0.8 1.4c0-.4.3-.7.7-.7h3.3l5.2 5.2-4 4L0.8 4.700000000000001z" fill="none" stroke="#1f2937" stroke-width="1.1" stroke-linejoin="round"/><path d="M2.5 2.5l2 2" stroke="#1f2937" stroke-width="1.1" stroke-linecap="round"/></svg></div>
<span class="t m" style="left:257.50px;top:692.20px;font-size:11.5px;color:#2a303c;letter-spacing:-0.322px;transform:scaleX(0.9294);">Labels</span>
<div class="btn" style="left:302.2px;top:690.4px;width:72.3px;height:19.3px"><svg style="position:absolute;left:5px;top:4px" width="13" height="10" viewBox="-0.500 -0.500 13.000 10.000"><path d="M0.9 0v8.1h10.6" fill="none" stroke="#1f2937" stroke-width="1.1"/><g fill="#1f2937"><rect x="2.6" y="2.8" width="1.5" height="4"/><rect x="5.4" y="4.8" width="1.5" height="2"/><rect x="8.2" y="1.6" width="1.5" height="5.2"/></g></svg></div>
<span class="t m" style="left:324.50px;top:692.20px;font-size:11.5px;color:#2a303c;letter-spacing:-0.322px;transform:scaleX(0.9255);">Compare</span>
<div class="btn" style="left:381.5px;top:690.4px;width:19.2px;height:19.3px"></div>
<div class="dots" style="left:387px;top:699px"><i></i><i></i><i></i></div>
<svg class="abs" style="left:368px;top:679px" width="46" height="45" viewBox="368 679 46 45"><rect x="377.45" y="688.85" width="27.50" height="26.00" rx="0.6" fill="none" stroke="#000" stroke-opacity="0.13" stroke-width="2.9" filter="url(#rbs)"/><rect x="377.45" y="688.05" width="27.50" height="26.00" rx="0.6" fill="none" stroke="#f62d3f" stroke-width="2.3"/></svg>
<div class="abs" style="left:406.6px;top:690.6px;width:18.8px;height:19.4px;border-radius:5.5px;background:#ee3b43"></div>
<svg class="abs" style="left:412px;top:696px" width="8" height="9" viewBox="0 0 8 9"><path d="M0.5 1h2l.5-.8h2l.5.8h2v1.100000000000001H0.5zM1 2.6h6v5.300000000000001c0 .5-.4.9-.9.9H1.900000000000001c-.5 0-.9-.4-.9-.9z" fill="#fff"/></svg>
<div class="btn" style="left:520.4px;top:690.6px;width:18px;height:19.2px"><svg style="position:absolute;left:4px;top:5px" width="8" height="8" viewBox="-0.600 -0.200 8.000 8.000"><path d="M0.5 0.5l6 6M6.5 0.5l-6 6" stroke="#111827" stroke-width="1.1"/></svg></div>

<!-- dropdown menu -->
<div class="abs" style="left:312px;top:574px;width:88.3px;height:110.8px;border-radius:6px;background:#fff;box-shadow:0 2px 10px rgba(0,0,0,.10),0 0 2px rgba(0,0,0,.06)"></div>
<svg class="abs" style="left:325px;top:589px" width="7" height="8" viewBox="0.000 -0.500 7.000 8.000"><path d="M3.5 0.2v6.6M0.2 3.5h6.6" stroke="#1f2937" stroke-width="1"/></svg>
<span class="t" style="left:342.00px;top:584.50px;font-size:9.5px;color:#374151;letter-spacing:-0.266px;transform:scaleX(0.9616);">Link</span>
<svg class="abs" style="left:323px;top:612px" width="11" height="10" viewBox="-0.200 -0.800 11.000 10.000"><path d="M5 0v5.2M2.7 3.2L5 5.5l2.3-2.3M0.6 5.8v2.5h8.8V5.8" fill="none" stroke="#1f2937" stroke-width="1.05"/></svg>
<span class="t" style="left:342.00px;top:609.50px;font-size:9.5px;color:#374151;letter-spacing:-0.266px;transform:scaleX(0.9706);">Download</span>
<svg class="abs" style="left:323px;top:637px" width="11" height="11" viewBox="-0.600 -0.200 11.000 11.000"><path d="M1.5 1.7L4.6 4.8 1.5 7.9M4.6 4.8H8" fill="none" stroke="#1f2937" stroke-width="1.1"/><circle cx="1.5" cy="1.7" r="1.25" fill="#1f2937"/><circle cx="1.5" cy="7.9" r="1.25" fill="#1f2937"/><circle cx="8" cy="4.8" r="1.3" fill="#1f2937"/></svg>
<span class="t" style="left:342.00px;top:634.00px;font-size:9.5px;color:#374151;letter-spacing:-0.266px;transform:scaleX(0.9662);">Merge</span>
<svg class="abs" style="left:324px;top:663px" width="10" height="10" viewBox="-0.400 -0.200 10.000 10.000"><path d="M0.3 4.5h7M3.9 1L7.4 4.5 3.9 8" fill="none" stroke="#1f2937" stroke-width="1.05"/></svg>
<span class="t" style="left:342.00px;top:659.00px;font-size:9.5px;color:#374151;letter-spacing:-0.266px;transform:scaleX(0.9449);">Move</span>
<svg class="abs" style="left:302px;top:624px" width="107" height="38" viewBox="302 624 107 38"><rect x="311.15" y="633.95" width="88.45" height="19.45" rx="0.6" fill="none" stroke="#000" stroke-opacity="0.13" stroke-width="2.9" filter="url(#rbs)"/><rect x="311.15" y="633.15" width="88.45" height="19.45" rx="0.6" fill="none" stroke="#f62d3f" stroke-width="2.3"/></svg>
<div class="num" style="left:393.8px;top:643.8px">4</div>
<div class="num" style="left:441.6px;top:633px">3</div>
<svg class="abs" style="left:401px;top:640px" width="50" height="48" viewBox="0 0 50 48"><g fill="none" stroke="#f62d3f" stroke-width="3.4" stroke-linecap="round" stroke-linejoin="round"><path d="M39.5 9L10.5 39.5"/><path d="M10.3 26.5L9.5 40.5 24.8 38.8"/></g></svg>
</body>
</html>
